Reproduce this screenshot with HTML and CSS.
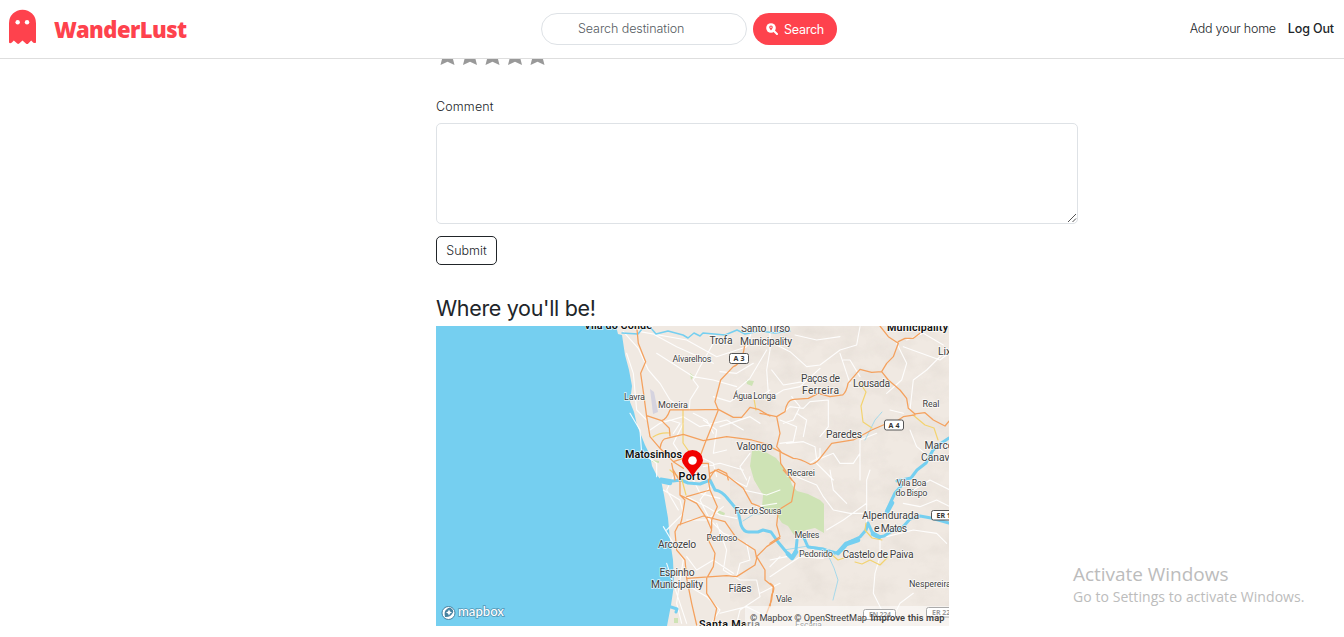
FILE: index.html
```html
<!DOCTYPE html>
<html lang="en">
<head>
<meta charset="utf-8">
<title>WanderLust</title>
<link rel="stylesheet" href="styles.css">
</head>
<body>
<header class="navbar">
  <a class="brand">
    <svg class="ghost" viewBox="0 0 28 36"><path d="M0 14A14 14 0 0 1 28 14V34Q26 35.500 24 33L23 32L19.500 35.500Q18.500 36 17.500 35L14 32L10.500 35Q9.500 36 8.500 35L5 32L3 34Q1 35.500 0 34Z" fill="#fe424d"/><circle cx="9" cy="13" r="2.300" fill="#fff"/><circle cx="18.700" cy="13" r="2.300" fill="#fff"/></svg>
    <span class="brand-name">WanderLust</span>
  </a>
  <form class="search">
    <span class="search-input">Search destination</span>
    <span class="search-btn">
      <svg class="search-icon" viewBox="0 0 12 12"><path d="M7.500 7.500L11 11" stroke="#fff" stroke-width="2" stroke-linecap="round"/><circle cx="5" cy="5" r="4.800" fill="#fff"/><path d="M5 7.600Q3.200 5.200 3.200 4.200A1.800 1.800 0 0 1 6.800 4.200Q6.800 5.200 5 7.600Z" fill="#fe424d"/><circle cx="5" cy="4.200" r=".7" fill="#fff"/></svg>
      <span class="search-label">Search</span>
    </span>
  </form>
  <nav class="links"><a class="add-home">Add your home</a><a class="logout">Log Out</a></nav>
</header>
<main class="content">
  <svg class="stars" viewBox="0 0 112 20">
    <defs><path id="star" d="M8.500 0L11 6.500H17.500L13.600 10.500L15.500 18L8.500 14.800L1.500 18L3.400 10.500L-.5 6.500H6Z" fill="#999"/></defs>
    <use href="#star" x="3"/><use href="#star" x="25.500"/><use href="#star" x="48"/><use href="#star" x="70.500"/><use href="#star" x="93"/>
  </svg>
  <label class="comment-label">Comment</label>
  <div class="comment-box"><svg class="grip" viewBox="0 0 10 10"><path d="M1 9L9 1M5.500 9L9 5.500" stroke="#555" fill="none"/></svg></div>
  <button class="submit"><span class="submit-text">Submit</span></button>
  <h2 class="where"><span class="where-text">Where you'll be!</span></h2>
  <svg class="map" viewBox="436 326 513 300">
    <defs>
      <filter id="relief" x="0" y="0" width="1" height="1"><feTurbulence type="fractalNoise" baseFrequency=".035 .05" numOctaves="4" seed="8"/><feColorMatrix values="0 0 0 0 .55  0 0 0 0 .5  0 0 0 0 .45  .9 0 0 0 -.36"/></filter>
      <clipPath id="land"><path d="M616 326L618 334L622 335L625 355L629 370L632 386L630 402L634 412L637 425L645 445L650 455L652 466L656 474L661 480L664 495L668 518L670 540L673 560L674 585L671 605L667 626H949V326Z"/></clipPath>
    </defs>
    <path class="sea" d="M436 326H949V626H436Z"/>
    <g clip-path="url(#land)">
      <path class="ground" d="M600 326H949V626H600Z"/>
      <rect x="730" y="326" width="219" height="300" filter="url(#relief)" opacity=".4"/>
      <path class="park" d="M752 451L762 450L776 458L788 472L792 485L797 491L808 494L820 500L824 504L824 518L824 533L815 528L806 530L794 535L788 526L782 523L776 514L768 512L762 507L763 495L754 480L750 466Z"/>
      <path class="park" d="M690 373L694 376L691 380ZM746 380L754 381L752 386L747 384ZM652 460L659 461L659 463L652 462ZM718 510L725 513L724 516L718 513ZM674 618H678V623H674Z"/>
      <path class="airport" d="M650 389L654 392L658 412L653 414Z"/>
    </g>
    <g class="white">
      <g transform="translate(570 320) scale(.3333)"><path d="M160 35L205 85L235 150L270 190L300 240L330 260M210 35L350 60L440 110M255 45L320 80L430 130M235 150L260 180M430 70L390 140L370 180L385 200L360 240L358 270M260 100L370 170L430 180L500 200M450 155L500 160L550 130M500 210L540 175L590 90M270 310L340 290L390 320L470 300L520 330M340 310L310 370L350 430M400 300L440 330L430 400L470 390M180 280L210 330L215 400L260 430L260 470M430 230L480 245L520 220L570 230L600 210M450 320L540 290L570 310M390 410L430 430L440 470M540 400L510 440L530 480M370 280L410 300L430 340M520 450L450 430L400 440M440 110L530 80L550 20M170 100L190 160L200 270L230 300M240 330L270 310L300 300L330 310L310 340"/></g>
      <g transform="translate(760 320) scale(.3333)"><path d="M30 18L30 90L20 150L25 220M50 75L90 95L140 140L180 135L240 90L290 75L300 20M105 45L170 60L240 50M240 100L270 190M180 145L120 200L70 210L20 240M60 285L90 260L130 265L150 245L205 240L205 320L180 350M95 230L120 260L100 300L70 310M60 300L110 320L100 365L60 370M80 370L130 365L165 380L170 420L220 400L240 430L280 430L300 400L300 480M410 70L440 130L425 180L380 220M560 90L500 150L460 180L450 270M440 60L490 40L550 75M430 80L540 120L567 100M390 270L430 280M300 400L300 360L350 340M130 350L140 300L110 280M170 430L190 450L220 480M450 330L470 380L520 420M35 150L70 195L130 185M300 170L270 120L250 120M180 385L180 410L150 430"/></g>
      <g transform="translate(600 470) scale(.3333)"><path d="M190 60L240 90L250 130L200 180M220 20L200 60L235 120M260 80L320 110L360 135L410 145M330 50L300 90L330 150L370 190L420 210M190 170L220 220L250 270L240 330L230 400L245 460M380 20L440 50L450 20M430 60L500 75L540 60M350 160L380 240L370 300M260 260L290 300L340 270L400 310M370 300L420 330L470 330L480 380L420 420L410 460M270 350L320 380L360 420L330 465M440 220L450 270L420 280L410 320M510 290L540 260M480 370L540 340M200 280L230 370L260 460M260 150L320 150L370 110M280 30L300 70L360 85M360 430L440 410L500 440M470 110L530 100"/></g>
      <g transform="translate(770 470) scale(.3333)"><path d="M80 20L140 45L160 80L190 120L240 130L290 130M180 0L190 60L230 100M290 160L290 30L300 0M330 210L330 260L315 310L310 370L340 430M400 100L450 110L500 90L540 110M350 200L430 180L500 190L530 220M160 265L90 260L30 300L0 320M540 60L480 30L430 60M430 370L390 400L370 440M0 270L50 260M290 100L220 150L170 180"/></g>
    </g>
    <g class="river">
      <path class="stream main" d="M622 333L638 334L642 329L650 327L656 334L668 331L683 335L688 338L694 333L700 336L703 333L725 335L737 330L745 334L760 331L775 333L790 331"/>
      <path class="stream" d="M784 550L808 546L824 548L835 555M828 555L834 568L838 580L833 600M865 440L875 420L882 412M743 521L754 514L762 514"/>
      <path d="M661 479L673 481L681 480L688 483L700 484L710 480L715 490Q722 491 728 499L738 511L741 525Q744 533 750 532L758 532L763 530L771 532L778 542L788 554L792 558L796 550L797 540M804 538L808 547L822 549L836 553L842 550L849 542L860 537L866 530L868 523L872 532L879 537L884 536L892 531L902 528L910 519L920 516L931 518L949 523M887 510L895 493L902 485M897 481L911 478L917 470L926 463L933 450L940 444L949 438"/>
      <path class="wide" d="M887 512L892 503M796 552L792 558L788 554M838 553L846 544L858 540M873 534L879 537M661 481L670 483"/>
      <path d="M671 607L677 609L676 612"/>
    </g>
    <g class="yellow">
      <path d="M683 410V443L690 453M653 437Q660 432 670 433M670 470L682 480L686 495M754 399L756 410M860 383L866 392L861 406L863 422L872 428M913 415L925 425L934 428L938 440M866 523L865 530L872 538L882 540M830 553L838 560L844 558M855 562L862 564L870 560L880 565L888 557"/>
    </g>
    <g class="orange">
      <g transform="translate(570 320) scale(.3333)"><path d="M200 18L205 70L227 125L212 160L220 215L230 290L240 350L270 385L310 425L340 445M525 65Q520 130 490 140L452 180L435 245L445 270L425 320L405 370L392 405M230 287L275 302Q290 298 300 270L370 270L445 268L490 292L515 292L540 262L565 268L600 288M275 302L298 325L300 348M270 385Q275 355 290 355L340 343L400 362L470 350L545 360L600 375M305 430L315 480M310 425L340 415L380 430L415 430L420 480M420 460L445 448L470 460L475 480"/></g>
      <g transform="translate(760 320) scale(.3333)"><path d="M0 280L50 290L75 275Q80 240 100 238L145 235L175 220L210 230L248 225Q260 215 264 190L300 148L335 157L365 155L380 130L400 110L415 70L385 50L360 18M415 65L435 55L460 55L480 40M365 155L385 180L420 210L440 235L445 265L465 282L495 278L520 300L555 318L570 300M465 285L430 290L400 310L370 315L335 330L280 360L215 370L180 415Q165 433 150 433Q120 415 100 415L65 398L50 380L60 340L50 290M30 380L60 395L62 430L95 480"/></g>
      <g transform="translate(600 470) scale(.3333)"><path d="M220 0L240 35L240 75L255 90L245 150L240 165M240 75L290 100L320 145L335 180L325 210L345 250L340 290L320 325L320 370L350 415L340 465M345 0L325 30L330 60L260 80M330 60L352 110L335 150L335 175M235 165L310 138L375 155L410 205L465 240L470 265L465 285L410 320L380 317L260 325M235 165L225 185L230 240L255 270L260 325L275 400L290 465M345 0L385 20L430 55L455 100L480 110M470 260L495 300L495 330L520 350L515 390L500 430M470 260L500 230L540 205"/></g>
      <g transform="translate(770 470) scale(.3333)"><path d="M40 0L75 40L65 95L25 120L20 165L30 200L0 220M0 340Q20 350 5 375L0 410"/></g>
    </g>
    <g class="labels">
      <text class="bold" x="584" y="328.500" textLength="68">Vila do Conde</text><text class="bold" x="887" y="331" textLength="61">Municipality</text>
      <text x="741" y="332" textLength="49">Santo Tirso</text><text x="709.500" y="344" textLength="23">Trofa</text><text x="740" y="345" textLength="52">Municipality</text>
      <text class="small" x="672.500" y="362" textLength="39">Alvarelhos</text><text class="small" x="624" y="399.500" textLength="21">Lavra</text><text class="small" x="658" y="408" textLength="30">Moreira</text><text class="small" x="733" y="399" textLength="43">Água Longa</text>
      <text x="801" y="381.500" textLength="39">Paços de</text><text x="802" y="394" textLength="37">Ferreira</text><text x="853" y="387" textLength="37">Lousada</text><text x="938" y="355">Lixa</text><text class="small" x="922.500" y="407" textLength="17">Real</text>
      <text x="826" y="437.500" textLength="36">Paredes</text><text x="736.500" y="450" textLength="36">Valongo</text><text x="924.500" y="449">Marco</text><text x="921" y="461">Canaveses</text><text class="small" x="787" y="476" textLength="28">Recarei</text>
      <text class="bold" x="625" y="457.500" textLength="57">Matosinhos</text><text class="bold porto" x="678.500" y="480" textLength="28">Porto</text>
      <text class="small" x="896.500" y="486" textLength="30">Vila Boa</text><text class="small" x="895.500" y="496" textLength="32">do Bispo</text><text x="862" y="519" textLength="57">Alpendurada</text><text x="874" y="531.500" textLength="33">e Matos</text>
      <text class="small" x="734.500" y="514" textLength="47">Foz do Sousa</text><text class="small" x="706.500" y="541" textLength="31">Pedroso</text><text class="small" x="794.500" y="538" textLength="25">Melres</text><text class="small" x="799" y="556.500" textLength="34">Pedorido</text><text x="842.500" y="558" textLength="71">Castelo de Paiva</text>
      <text x="658" y="548" textLength="38">Arcozelo</text><text x="659.500" y="576" textLength="35">Espinho</text><text x="651" y="588" textLength="52">Municipality</text><text x="728.500" y="592" textLength="23">Fiães</text><text class="small" x="776" y="602" textLength="16">Vale</text><text class="small" x="909" y="587" textLength="42">Nespereira</text><text class="bold" x="699" y="627.500" textLength="61">Santa Maria</text><text class="small" x="795" y="628" textLength="27">Escaria</text>
    </g>
    <g class="shields">
      <rect x="729.500" y="353.500" width="19" height="10" rx="2"/><text x="733.500" y="361.200" textLength="11">A 3</text>
      <rect x="884.500" y="420" width="19" height="10" rx="2"/><text x="888.500" y="427.700" textLength="11">A 4</text>
      <rect x="931.500" y="510.500" width="29" height="9.500" rx="2"/><text x="936.500" y="518">ER 108</text>
      <rect x="863.500" y="609.500" width="32" height="10" rx="2"/><text x="869" y="617.200" textLength="22">EN 224</text>
      <rect x="926.500" y="607.500" width="32" height="9.500" rx="2"/><text x="932" y="614.500">ER 225</text>
    </g>
    <path d="M692.500 477Q691 473 685 466.500Q682 463 682 460.500A10.500 10.500 0 0 1 703 460.500Q703 463 700 466.500Q694 473 692.500 477Z" fill="#f00000"/><circle cx="692.500" cy="460.500" r="4.300" fill="#fff"/>
    <rect x="745" y="606" width="204" height="20" fill="#fff" opacity=".5"/>
    <text class="credit" x="750" y="621" textLength="117">© Mapbox © OpenStreetMap</text><text class="credit improve" x="870.500" y="621" textLength="74">Improve this map</text>
    <circle cx="448.500" cy="613" r="6.500" fill="#fff" stroke="#4782a0"/><path d="M445 617Q443.500 611 447 609A3.500 3.500 0 0 1 452 614Q450 617.500 445 617Z" fill="#4782a0"/><path d="M449 609.500L450 611.500L452 612.500L450 613.500L449 615.500L448 613.500L446 612.500L448 611.500Z" fill="#fff"/>
    <text class="mapbox" x="458" y="616" textLength="46" lengthAdjust="spacingAndGlyphs">mapbox</text>
  </svg>
</main>
<aside class="watermark"><div class="wm-title">Activate Windows</div><div class="wm-text">Go to Settings to activate Windows.</div></aside>
</body>
</html>
```
FILE: styles.css
```css
* { box-sizing: border-box; }
body { margin: 0; height: 637px; overflow: hidden; background: #fff; color: #212529; font-family: Inter, "Open Sans", sans-serif; font-size: 12.500px; font-weight: 300; }
.navbar { height: 59px; display: flex; align-items: center; justify-content: space-between; border-bottom: 1px solid #dedede; padding: 0 10px 0 9px; }
.brand { display: flex; align-items: center; gap: 18px; width: 532px; }
.ghost { width: 27px; height: 36px; margin-top: -4px; }
.brand-name { color: #fe424d; font: 900 22px/28px "Noto Sans", sans-serif; letter-spacing: -.53px; }
.search { display: flex; gap: 6px; margin: 0; flex: 1; }
.search-input { width: 206px; height: 32px; border: 1px solid #dee2e6; border-radius: 16px; padding-left: 36px; line-height: 29px; color: #555b61; letter-spacing: -.08px; white-space: nowrap; }
.search-btn { width: 84px; height: 32px; border-radius: 16px; background: #fe424d; color: #fff; font-weight: 400; display: flex; align-items: center; padding-left: 13px; gap: 6px; }
.search-icon { width: 12px; height: 12px; }
.search-label { letter-spacing: -.25px; font-size: 12.500px; }
.links { display: flex; gap: 12px; white-space: nowrap; padding-bottom: 1px; }
.add-home { letter-spacing: -.24px; }
.logout { font-weight: 500; letter-spacing: -.13px; }
.content { width: 642px; margin-left: 436px; display: flex; flex-direction: column; align-items: flex-start; }
.stars { width: 112px; height: 20px; margin-top: -12px; clip-path: inset(12px 0 0 0); }
.comment-label { margin-top: 31px; line-height: 18px; letter-spacing: .15px; }
.comment-box { width: 642px; height: 101px; margin-top: 7px; border: 1px solid #dee2e6; border-radius: 5px; display: flex; justify-content: flex-end; align-items: flex-end; }
.grip { width: 10px; height: 10px; }
.submit { width: 61px; height: 29px; margin-top: 12px; padding: 0 0 1px; border: 1px solid #212529; border-radius: 5px; background: #fff; color: #212529; font: 300 12.500px Inter, sans-serif; }
.where { margin: 30px 0 0; height: 31px; font-size: 21.500px; line-height: 27px; font-weight: 400; letter-spacing: -.33px; white-space: nowrap; }
.map { width: 513px; height: 300px; display: block; }
.sea { fill: #75cff0; }
.ground { fill: #f0e9e2; }
.park { fill: #cee3b5; }
.airport { fill: #d5d3df; }
.white, .river, .yellow, .orange { fill: none; stroke-linejoin: round; stroke-linecap: round; }
.white { stroke: #fff; stroke-width: 3.400px; stroke-opacity: .9; }
.river { stroke: #75cff0; stroke-width: 3px; }
.stream { stroke-width: 1px; stroke-opacity: .6; }
.main { stroke-width: 1.500px; stroke-opacity: 1; }
.wide { stroke-width: 4.500px; }
.yellow { stroke: #f3d36f; stroke-width: 1.200px; }
.orange { stroke: #f4a15e; stroke-width: 3.800px; }
.labels text { font: 400 10.300px Roboto, sans-serif; fill: #404040; stroke: #fff; stroke-width: 1.500px; stroke-opacity: .75; paint-order: stroke; }
.labels .small { font-size: 9px; }
.labels .bold { font-weight: 600; font-size: 10.800px; fill: #111; }
.shields rect { fill: #fff; stroke: #555; }
.shields text { font: 700 7px "Noto Sans", sans-serif; fill: #333; }
.credit { font: 400 9.200px Roboto, sans-serif; fill: #404040; }
.improve { font-weight: 600; }
.mapbox { font: 500 12.500px Lato, sans-serif; fill: #fff; stroke: #4782a0; stroke-width: 1.500px; stroke-opacity: .75; paint-order: stroke; }
.watermark { position: absolute; left: 1073px; top: 562px; color: #bcbcbc; font-family: "Open Sans", sans-serif; font-weight: 400; white-space: nowrap; }
.wm-title { font-size: 19px; line-height: 24px; letter-spacing: -.03px; }
.wm-text { font-size: 14px; line-height: 22px; letter-spacing: .06px; }
```
